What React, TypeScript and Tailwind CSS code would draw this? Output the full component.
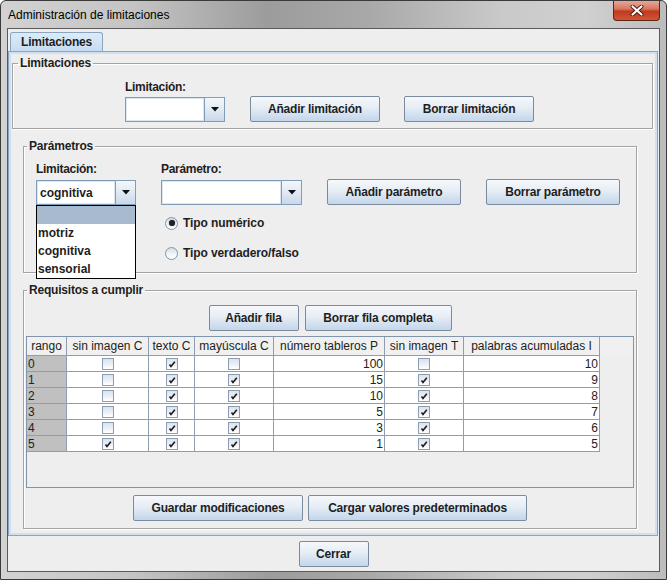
import React from "react";

const sans = "font-['Liberation_Sans',Arial,sans-serif]";

function JButton({ w, children }: { w: string; children: React.ReactNode }) {
  return (
    <div
      className={`${w} h-[26px] shrink-0 flex items-center justify-center rounded-[2px] border border-[#7a8b9e] bg-[linear-gradient(180deg,#f6f8fb_0%,#e6edf5_45%,#d5e2f0_70%,#c4d6eb_100%)] text-[12px] font-bold text-[#1e1e1e] tracking-[-0.2px]`}
    >
      {children}
    </div>
  );
}

function Arrow() {
  return (
    <svg width="8" height="5" viewBox="0 0 8 5">
      <path d="M0 0H8L4 4.5Z" fill="#111" />
    </svg>
  );
}

function Combo({ w, value }: { w: string; value?: string }) {
  return (
    <div className={`${w} h-[25px] flex border border-[#7f9db9] bg-white`}>
      <div className="flex-1 flex items-center pl-[2px] text-[12px] font-bold text-[#1e1e1e] border border-[#dbe6f1]">
        {value}
      </div>
      <div className="w-[20px] flex items-center justify-center border-l border-[#7f9db9] bg-[linear-gradient(180deg,#f4f7fb_0%,#dfe8f2_55%,#c8d8ea_100%)]">
        <Arrow />
      </div>
    </div>
  );
}

function Radio({ checked, label }: { checked?: boolean; label: string }) {
  return (
    <div className="h-[16px] flex items-center gap-[5px]">
      <div className="w-[13px] h-[13px] rounded-full border border-[#8294a8] bg-[linear-gradient(180deg,#d6dee7_0%,#f4f6f9_60%,#ffffff_100%)] flex items-center justify-center">
        {checked && <div className="w-[6px] h-[6px] rounded-full bg-[#222] shadow-[0_0_1px_#555]" />}
      </div>
      <span className="text-[12px] font-bold text-[#1e1e1e] tracking-[-0.1px]">{label}</span>
    </div>
  );
}

function Check({ on }: { on: boolean }) {
  return (
    <div className="w-[12px] h-[12px] border border-[#8b9db2] bg-[linear-gradient(180deg,#dbe3ec_0%,#eef2f6_60%,#ffffff_100%)] flex items-center justify-center">
      {on && (
        <svg width="8" height="8" viewBox="0 0 8 8">
          <path d="M1.5 4.5L3 6.5L6.8 1.8" stroke="#1b1b1b" strokeWidth="1.6" fill="none" />
        </svg>
      )}
    </div>
  );
}

function Group({ title, cls, legendCls, children }: { title: string; cls: string; legendCls: string; children: React.ReactNode }) {
  return (
    <fieldset className={`${cls} border border-[#a3a3a3] shadow-[inset_1px_1px_0_#ffffff,1px_1px_0_#ffffff] relative`}>
      <legend className={`${legendCls} px-[2px] text-[12px] leading-[12px] font-bold text-[#1e1e1e] tracking-[-0.2px]`}>
        {title}
      </legend>
      {children}
    </fieldset>
  );
}

const cols = [
  { name: "rango", w: "w-[40px]" },
  { name: "sin imagen C", w: "w-[82px]" },
  { name: "texto C", w: "w-[46px]" },
  { name: "mayúscula C", w: "w-[79px]" },
  { name: "número tableros P", w: "w-[111px]" },
  { name: "sin imagen T", w: "w-[79px]" },
  { name: "palabras acumuladas I", w: "w-[136px]" },
];

const rows = [
  { r: "0", a: false, b: true, c: false, n: "100", t: false, p: "10" },
  { r: "1", a: false, b: true, c: true, n: "15", t: true, p: "9" },
  { r: "2", a: false, b: true, c: true, n: "10", t: true, p: "8" },
  { r: "3", a: false, b: true, c: true, n: "5", t: true, p: "7" },
  { r: "4", a: false, b: true, c: true, n: "3", t: true, p: "6" },
  { r: "5", a: true, b: true, c: true, n: "1", t: true, p: "5" },
];

function Table() {
  const cell = "h-[16px] border-r border-b border-[#8e9db0] flex items-center";
  return (
    <div className="ml-[2px] w-[608px] h-[152px] border border-[#8095ab] bg-[#eeeeee] text-[12px] text-[#222]">
      <div className="flex h-[19px] bg-[#f0f0f0]">
        {cols.map((c) => (
          <div key={c.name} className={`${c.w} h-[19px] border-r border-b border-[#8e9db0] flex items-center justify-center whitespace-nowrap overflow-hidden`}>
            {c.name}
          </div>
        ))}
      </div>
      {rows.map((row) => (
        <div key={row.r} className="flex">
          <div className={`${cell} w-[40px] bg-[#c0c0c0] pl-[1px]`}>{row.r}</div>
          <div className={`${cell} w-[82px] bg-white justify-center`}><Check on={row.a} /></div>
          <div className={`${cell} w-[46px] bg-white justify-center`}><Check on={row.b} /></div>
          <div className={`${cell} w-[79px] bg-white justify-center`}><Check on={row.c} /></div>
          <div className={`${cell} w-[111px] bg-white justify-end pr-[1px]`}>{row.n}</div>
          <div className={`${cell} w-[79px] bg-white justify-center`}><Check on={row.t} /></div>
          <div className={`${cell} w-[136px] bg-white justify-end pr-[1px]`}>{row.p}</div>
        </div>
      ))}
    </div>
  );
}

export default function App() {
  return (
    <div
      className={`${sans} w-[667px] h-[580px] relative overflow-hidden border border-[#3a3a3a] rounded-t-[6px] bg-[linear-gradient(90deg,#d2d2d2_0%,#c4c4c4_20%,#9c9c9c_40%,#a8a8a8_55%,#c9c9c9_75%,#d0d0d0_88%,#bcbcbc_100%)]`}
    >
      {/* title bar */}
      <div className="h-[27px] flex items-center pl-[7px] text-[12px] text-black">
        Administración de limitaciones
      </div>
      <div className="absolute top-0 right-[6px] w-[47px] h-[20px] rounded-b-[4px] border border-t-0 border-[#5e2418] bg-[linear-gradient(180deg,#e8a597_0%,#d77a63_40%,#c23a1d_55%,#cf5637_100%)] flex items-center justify-center">
        <svg width="14" height="11" viewBox="0 0 14 11">
          <path d="M2.5 1.5L11.5 9.5M11.5 1.5L2.5 9.5" stroke="#4b1a10" strokeWidth="4" strokeLinecap="round" />
          <path d="M2.5 1.5L11.5 9.5M11.5 1.5L2.5 9.5" stroke="#ffffff" strokeWidth="2.2" strokeLinecap="round" />
        </svg>
      </div>

      {/* client area */}
      <div className="ml-[6px] w-[653px] h-[544px] border border-[#5a5a5a] bg-[#eeeeee] flex flex-col">
        {/* tab strip */}
        <div className="pt-[3px] pl-[2px] flex">
          <div className="w-[93px] h-[19px] rounded-t-[3px] border border-b-0 border-[#8ba4bf] bg-[linear-gradient(180deg,#dcebf9_0%,#c7dcf2_100%)] flex items-center justify-center text-[12px] font-bold text-[#1e1e1e] tracking-[-0.2px]">
            Limitaciones
          </div>
        </div>

        {/* tab panel */}
        <div className="w-[650px] h-[485px] border border-[#8ba4bf] flex flex-col">
          <div className="flex-1 border-2 border-[#cfe0f2] flex flex-col">
            {/* Limitaciones group */}
            <Group title="Limitaciones" cls="ml-[1px] mt-[3px] w-[641px] h-[72px]" legendCls="ml-[5px]">
              <div className="ml-[112px] mt-[11px] flex items-end">
                <div className="flex flex-col">
                  <span className="text-[12px] leading-[14px] font-bold text-[#1e1e1e] tracking-[-0.3px]">Limitación:</span>
                  <div className="mt-[3px]">
                    <Combo w="w-[100px]" />
                  </div>
                </div>
                <div className="ml-[25px]">
                  <JButton w="w-[130px]">Añadir limitación</JButton>
                </div>
                <div className="ml-[24px]">
                  <JButton w="w-[130px]">Borrar limitación</JButton>
                </div>
              </div>
            </Group>

            {/* Parámetros group */}
            <Group title="Parámetros" cls="ml-[12px] mt-[11px] w-[614px] h-[133px]" legendCls="ml-[3px]">
              <div className="ml-[12px] mt-[10px] flex items-start">
                <div className="flex flex-col relative">
                  <span className="text-[12px] leading-[14px] font-bold text-[#1e1e1e] tracking-[-0.3px]">Limitación:</span>
                  <div className="mt-[4px]">
                    <Combo w="w-[100px]" value="cognitiva" />
                  </div>
                  {/* open dropdown list */}
                  <div className="absolute left-0 top-[43px] w-[100px] border border-black bg-white text-[12px] font-bold text-[#1e1e1e] z-10">
                    <div className="h-[18px] bg-[#a8bacd]" />
                    <div className="h-[18px] flex items-center pl-[1px]">motriz</div>
                    <div className="h-[18px] flex items-center pl-[1px]">cognitiva</div>
                    <div className="h-[18px] flex items-center pl-[1px]">sensorial</div>
                  </div>
                </div>
                <div className="ml-[25px] flex flex-col">
                  <span className="text-[12px] leading-[14px] font-bold text-[#1e1e1e] tracking-[-0.3px]">Parámetro:</span>
                  <div className="mt-[4px]">
                    <Combo w="w-[141px]" />
                  </div>
                  <div className="ml-[4px] mt-[10px]">
                    <Radio checked label="Tipo numérico" />
                  </div>
                  <div className="ml-[4px] mt-[14px]">
                    <Radio label="Tipo verdadero/falso" />
                  </div>
                </div>
                <div className="ml-[25px] mt-[17px]">
                  <JButton w="w-[134px]">Añadir parámetro</JButton>
                </div>
                <div className="ml-[25px] mt-[17px]">
                  <JButton w="w-[134px]">Borrar parámetro</JButton>
                </div>
              </div>
            </Group>

            {/* Requisitos group */}
            <Group title="Requisitos a cumplir" cls="ml-[12px] mt-[11px] w-[614px] h-[245px]" legendCls="ml-[3px]">
              <div className="mt-[9px] flex justify-center gap-[6px]">
                <JButton w="w-[90px]">Añadir fila</JButton>
                <JButton w="w-[147px]">Borrar fila completa</JButton>
              </div>
              <div className="mt-[5px]">
                <Table />
              </div>
              <div className="mt-[7px] flex justify-center gap-[5px]">
                <JButton w="w-[170px]">Guardar modificaciones</JButton>
                <JButton w="w-[219px]">Cargar valores predeterminados</JButton>
              </div>
            </Group>
          </div>
        </div>

        {/* bottom */}
        <div className="mt-[5px] flex justify-center">
          <JButton w="w-[70px]">Cerrar</JButton>
        </div>
      </div>
    </div>
  );
}
